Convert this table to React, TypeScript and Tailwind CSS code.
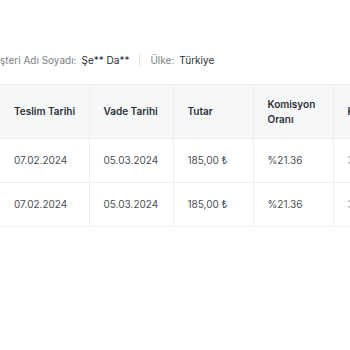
export default function App() {
  const rows = [
    { teslim: "07.02.2024", vade: "05.03.2024", tutar: "185,00 ₺", oran: "%21.36", kom: "39,52 ₺" },
    { teslim: "07.02.2024", vade: "05.03.2024", tutar: "185,00 ₺", oran: "%21.36", kom: "39,52 ₺" },
  ];

  return (
    <div className="w-[350px] h-[350px] overflow-hidden bg-white font-['Inter',sans-serif]">
      {/* customer info line */}
      <div className="ml-[-15px] mt-[53px] flex items-center text-[10px] leading-[14px] whitespace-nowrap">
        <span className="text-[#7a7f87]">Müşteri Adı Soyadı:</span>
        <span className="ml-[5px] text-[#2b2f36]">Şe** Da**</span>
        <span className="mx-[10px] h-[12px] w-px bg-[#e3e5e8]" />
        <span className="text-[#7a7f87]">Ülke:</span>
        <span className="ml-[5px] text-[#2b2f36]">Türkiye</span>
      </div>

      <table className="mt-[17px] border-collapse table-fixed w-[453px] text-[10px]">
        <colgroup>
          <col className="w-[89px]" />
          <col className="w-[84px]" />
          <col className="w-[80px]" />
          <col className="w-[80px]" />
          <col className="w-[120px]" />
        </colgroup>
        <thead>
          <tr className="h-[54px] bg-[#f6f7f9] border-y border-[#eceef1]">
            {["Teslim Tarihi", "Vade Tarihi", "Tutar", "Komisyon Oranı", "Komisyon Tutarı"].map((h, i) => (
              <th
                key={h}
                className={`pl-[14px] pr-2 text-left font-semibold leading-[15px] text-[#2b2f36] border-[#eceef1] whitespace-nowrap ${i > 0 ? "border-l" : ""}`}
              >
                {h === "Komisyon Oranı" ? (
                  <>
                    Komisyon
                    <br />
                    Oranı
                  </>
                ) : (
                  h
                )}
              </th>
            ))}
          </tr>
        </thead>
        <tbody>
          {rows.map((r, i) => (
            <tr key={i} className="h-[44px] border-b border-[#eceef1]">
              <td className="pl-[14px] text-[#4a4f57]">{r.teslim}</td>
              <td className="pl-[14px] text-[#4a4f57] border-l border-[#eceef1]">{r.vade}</td>
              <td className="pl-[14px] text-[#4a4f57] border-l border-[#eceef1]">{r.tutar}</td>
              <td className="pl-[14px] text-[#4a4f57] border-l border-[#eceef1]">{r.oran}</td>
              <td className="pl-[14px] text-[#9aa0a8] border-l border-[#eceef1]">{r.kom}</td>
            </tr>
          ))}
        </tbody>
      </table>
    </div>
  );
}
